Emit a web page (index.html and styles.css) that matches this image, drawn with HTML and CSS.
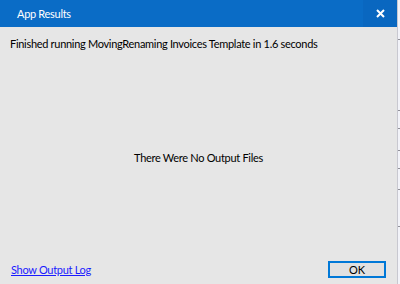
FILE: index.html
```html
<!DOCTYPE html>
<html lang="en">
<head>
    <meta charset="UTF-8">
    <title>App Results</title>
    <link rel="stylesheet" href="styles.css">
</head>
<body>

    <div class="screen">
        <!-- Dialog -->
        <div class="dialog">
            <div class="title-bar">
                <span class="title">App Results</span>
                <span class="close">
                    <svg width="9" height="9" viewBox="0 0 9 9">
                        <path d="M1 1 L8 8 M8 1 L1 8" stroke="#fff" stroke-width="2"/>
                    </svg>
                </span>
            </div>
            <p class="summary">Finished running MovingRenaming Invoices Template in 1.6 seconds</p>
            <div class="message">There Were No Output Files</div>
            <div class="footer">
                <a href="#" class="log-link">Show Output Log</a>
                <button class="ok-button">OK</button>
            </div>
        </div>

        <!-- Window behind the dialog -->
        <div class="behind">
            <span class="tick t1"></span>
            <span class="tick t2"></span>
            <span class="tick t3"></span>
            <span class="tick t4"></span>
            <span class="tick t5"></span>
            <span class="tick t6"></span>
            <span class="tick t7"></span>
        </div>
    </div>

</body>
</html>
```

FILE: styles.css
```css
/* General Styles */
body {
    margin: 0;
    font-family: Lato, "Liberation Sans", sans-serif;
    font-size: 11px;
    letter-spacing: -0.3px;
    color: #000;
}

.screen {
    display: flex;
    width: 400px;
    height: 284px;
    overflow: hidden;
}

/* Dialog */
.dialog {
    width: 397px;
    display: flex;
    flex-direction: column;
    background: #e6e6e6;
}

.title-bar {
    height: 27px;
    background: #0a6cc6;
    display: flex;
    align-items: center;
    justify-content: space-between;
    color: #fff;
}

.title {
    padding-left: 17px;
}

.close {
    width: 34px;
    height: 27px;
    display: flex;
    align-items: center;
    justify-content: center;
    background: #0967c0;
}

.summary {
    margin: 9px 0 0 10px;
    line-height: 16px;
}

.message {
    flex: 1;
    display: flex;
    align-items: center;
    justify-content: center;
    padding-top: 2px;
}

.footer {
    display: flex;
    justify-content: space-between;
    align-items: center;
    padding: 0 11px 6px 11px;
}

.log-link {
    color: #1a1aff;
    text-decoration: underline;
}

.ok-button {
    width: 58px;
    height: 17px;
    padding: 0;
    border: 2px solid #0078d7;
    background: #e1e1e1;
    font-family: inherit;
    font-size: 11px;
    line-height: 12px;
    color: #000;
}

/* Window behind */
.behind {
    flex: 1;
    position: relative;
    background: #f2f3f9;
    border-left: 1px solid #c8c8d0;
}

.tick {
    position: absolute;
    left: 0;
    width: 3px;
    height: 1px;
    background: #909098;
}

.t1 { top: 39px; }
.t2 { top: 110px; }
.t3 { top: 128px; }
.t4 { top: 150px; }
.t5 { top: 168px; }
.t6 { top: 189px; }
.t7 { top: 226px; }
```
